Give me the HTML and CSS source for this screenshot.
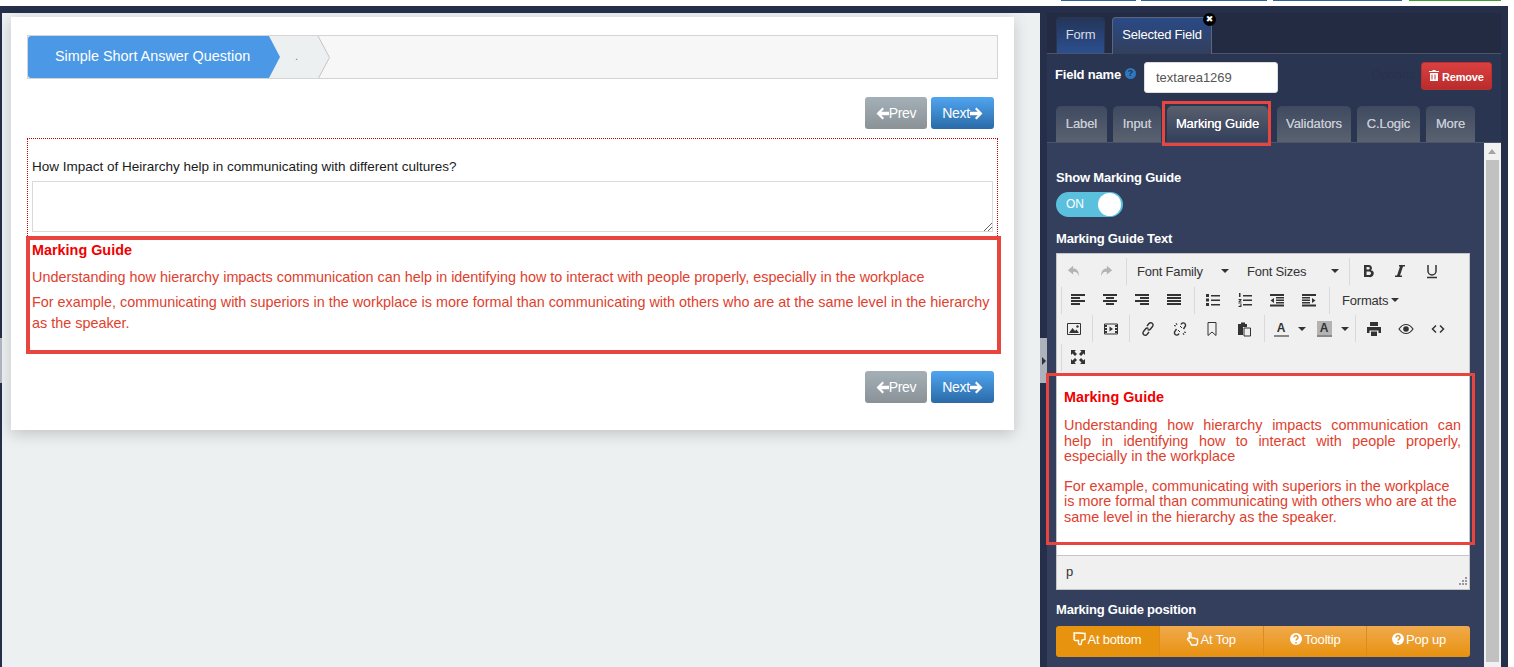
FILE: index.html
```html
<!DOCTYPE html>
<html lang="en">

<head>
    <meta charset="UTF-8" />
    <title>Marking Guide</title>
    <link rel="stylesheet" href="styles.css">
</head>

<body>
    <div class="topstrip">
        <span class="topbtn blue1"></span>
        <span class="topbtn blue2"></span>
        <span class="topbtn blue3"></span>
        <span class="topbtn green"></span>
    </div>
    <div class="app">
        <div class="leftpane">
            <div class="card">
                <div class="steps">
                    <div class="step-active">Simple Short Answer Question</div>
                    <div class="step-next">
                        <span class="dot">.</span>
                        <svg class="chevron" width="13" height="43" viewBox="0 0 13 43">
                            <path d="M0 0H1L12.500 21.500L1 43H0Z" fill="#ecf0f1" />
                            <path d="M1 0L12.500 21.500L1 43" fill="none" stroke="#c4c4c4" />
                        </svg>
                    </div>
                </div>
                <div class="pager">
                    <button class="btn prev"><svg class="arrow" width="13" height="13" viewBox="0 0 13 13"><path d="M6.500.5L.5 6.500l6 6L8 11 5.300 8.300H13V4.700H5.300L8 2z" fill="#fff" /></svg>Prev</button>
                    <button class="btn next">Next<svg class="arrow" width="13" height="13" viewBox="0 0 13 13"><path d="M6.500.5l6 6-6 6L5 11l2.700-2.700H0V4.700h7.700L5 2z" fill="#fff" /></svg></button>
                </div>
                <div class="question">
                    <label class="qlabel">How Impact of Heirarchy help in communicating with different cultures?</label>
                    <div class="answer">
                        <svg class="grip" width="9" height="9" viewBox="0 0 9 9"><path d="M9 1L1 9M9 5L5 9" stroke="#666" fill="none" /></svg>
                    </div>
                </div>
                <div class="guide">
                    <h4>Marking Guide</h4>
                    <p>Understanding how hierarchy impacts communication can help in identifying how to interact with people properly, especially in the workplace</p>
                    <p>For example, communicating with superiors in the workplace is more formal than communicating with others who are at the same level in the hierarchy as the speaker.</p>
                </div>
                <div class="pager pager-bottom">
                    <button class="btn prev"><svg class="arrow" width="13" height="13" viewBox="0 0 13 13"><path d="M6.500.5L.5 6.500l6 6L8 11 5.300 8.300H13V4.700H5.300L8 2z" fill="#fff" /></svg>Prev</button>
                    <button class="btn next">Next<svg class="arrow" width="13" height="13" viewBox="0 0 13 13"><path d="M6.500.5l6 6-6 6L5 11l2.700-2.700H0V4.700h7.700L5 2z" fill="#fff" /></svg></button>
                </div>
            </div>
            <div class="edgehandle"></div>
        </div>

        <div class="divider">
            <div class="collapse"><span class="collapse-arrow"></span></div>
        </div>

        <div class="rightpane">
            <div class="maintabs">
                <div class="tab">Form</div>
                <div class="tab tab-on">Selected Field<span class="closex">✖</span></div>
            </div>
            <div class="fieldrow">
                <span class="fieldlabel">Field name</span>
                <span class="helpdot">?</span>
                <div class="fieldinput">textarea1269</div>
                <span class="options">Options</span>
                <button class="removebtn">
                    <svg width="10" height="11" viewBox="0 0 10 11"><path d="M3.500 1V0h3v1H10v1H0V1zM1 3h8v8H1zm1.500 1.500v5h1v-5zm3 0v5h1v-5z" fill="#fff" /></svg>
                    Remove
                </button>
            </div>
            <div class="subtabs">
                <div class="subtab st-label">Label</div>
                <div class="subtab st-input">Input</div>
                <div class="subtab subtab-on">Marking Guide</div>
                <div class="subtab st-valid">Validators</div>
                <div class="subtab st-logic">C.Logic</div>
                <div class="subtab st-more">More</div>
            </div>
            <div class="panel">
                <div class="panelbody">
                    <div class="section-title first">Show Marking Guide</div>
                    <div class="toggle"><span>ON</span><i class="knob"></i></div>
                    <div class="section-title title-text">Marking Guide Text</div>
                    <div class="editor">
                        <div class="toolbar">
                            <div class="tbrow">
                                <span class="ic"><svg width="14" height="14" viewBox="0 0 16 16"><path d="M7 2L1 7l6 5V9c3-.5 5 .5 6.500 5C14 8 11 5 7 5z" fill="#b3b3b3" /></svg></span>
                                <span class="ic"><svg width="14" height="14" viewBox="0 0 16 16"><path d="M9 2l6 5-6 5V9c-3-.5-5 .5-6.500 5C2 8 5 5 9 5z" fill="#b3b3b3" /></svg></span>
                                <i class="sep"></i>
                                <span class="drop w110">Font Family<b class="caret"></b></span>
                                <span class="drop w106">Font Sizes<b class="caret"></b></span>
                                <i class="sep"></i>
                                <span class="ic"><svg width="16" height="16" viewBox="0 0 16 16"><path d="M4 2h5a3 3 0 0 1 2 5.200A3.400 3.400 0 0 1 9.500 14H4zm2.500 2v2.500H8.500a1.200 1.200 0 0 0 0-2.500zm0 4.500V12h2.800a1.700 1.700 0 0 0 0-3.500z" fill="#333" /></svg></span>
                                <span class="ic"><svg width="16" height="16" viewBox="0 0 16 16"><path d="M7 2h6v1.500h-2L8 12.500h2V14H3v-1.500h2L8 3.500H7z" fill="#333" /></svg></span>
                                <span class="ic"><svg width="16" height="16" viewBox="0 0 16 16"><path d="M4 2v6a4 4 0 0 0 8 0V2M3 14.500h10" fill="none" stroke="#333" stroke-width="1.500" /></svg></span>
                            </div>
                            <div class="tbrow">
                                <i class="sep sep-lead"></i>
                                <span class="ic"><svg width="16" height="16" viewBox="0 0 16 16"><path d="M1 2h14v2H1zm0 3h9v2H1zm0 3h14v2H1zm0 3h9v2H1z" fill="#333" /></svg></span>
                                <span class="ic"><svg width="16" height="16" viewBox="0 0 16 16"><path d="M1 2h14v2H1zm3 3h8v2H4zM1 8h14v2H1zm3 3h8v2H4z" fill="#333" /></svg></span>
                                <span class="ic"><svg width="16" height="16" viewBox="0 0 16 16"><path d="M1 2h14v2H1zm5 3h9v2H6zM1 8h14v2H1zm5 3h9v2H6z" fill="#333" /></svg></span>
                                <span class="ic"><svg width="16" height="16" viewBox="0 0 16 16"><path d="M1 2h14v2H1zm0 3h14v2H1zm0 3h14v2H1zm0 3h14v2H1z" fill="#333" /></svg></span>
                                <i class="sep"></i>
                                <span class="ic"><svg width="16" height="16" viewBox="0 0 16 16"><path d="M1 2h3v3H1zm0 4.500h3v3H1zM1 11h3v3H1zM6 3h9v1.500H6zm0 4.500h9V9H6zM6 12h9v1.500H6z" fill="#333" /></svg></span>
                                <span class="ic"><svg width="16" height="16" viewBox="0 0 16 16"><path d="M6 3h9v1.500H6zm0 4.500h9V9H6zM6 12h9v1.500H6zM2 1h1.500v4H2zM1.500 7h3v1l-1.500 1.500h1.500v1h-3v-1L3 8H1.500zm0 4.500h3v3.500h-3v-1h2v-.5h-1v-.5h1V12h-2z" fill="#333" /></svg></span>
                                <span class="ic"><svg width="16" height="16" viewBox="0 0 16 16"><path d="M1 2h14v2H1zm6 3h8v1.500H7zm0 2.500h8V9H7zM7 10h8v1.500H7zM1 12.500h14V14.500H1zM5 6v5L1.500 8.500z" fill="#333" /></svg></span>
                                <span class="ic"><svg width="16" height="16" viewBox="0 0 16 16"><path d="M1 2h14v2H1zm0 3h8v1.500H1zm0 2.500h8V9H1zM1 10h8v1.500H1zM1 12.500h14V14.500H1zM11 6v5l3.500-2.500z" fill="#333" /></svg></span>
                                <i class="sep"></i>
                                <span class="drop formats">Formats<b class="caret"></b></span>
                            </div>
                            <div class="tbrow">
                                <span class="ic"><svg width="16" height="16" viewBox="0 0 16 16"><path d="M1.500 2.500h13v11h-13z" fill="none" stroke="#333" /><path d="M3 12l3.500-5 2.500 3 1.500-1.500L13 12z" fill="#333" /><circle cx="11.500" cy="5.500" r="1.200" fill="#333" /></svg></span>
                                <i class="sep sep-tight"></i>
                                <span class="ic"><svg width="16" height="16" viewBox="0 0 16 16"><path d="M1.500 3h13v10h-13z" fill="none" stroke="#333" /><path d="M2 4h2v2H2zm0 3h2v2H2zm0 3h2v2H2zm10-6h2v2h-2zm0 3h2v2h-2zm0 3h2v2h-2zM6.500 5.500v5L10 8z" fill="#333" /></svg></span>
                                <i class="sep sep-tight"></i>
                                <span class="ic"><svg width="16" height="16" viewBox="0 0 16 16"><path d="M7 5l2-2.500a2.300 2.300 0 0 1 3.500 3L10.500 8a2.300 2.300 0 0 1-3 .5M9 11l-2 2.500a2.300 2.300 0 0 1-3.500-3L5.500 8a2.300 2.300 0 0 1 3-.5" fill="none" stroke="#333" stroke-width="1.400" /></svg></span>
                                <span class="ic"><svg width="16" height="16" viewBox="0 0 16 16"><path d="M9 3.500l.5-.8a2.300 2.300 0 0 1 3.500 3L11.500 8M7 12.500l-.5.800a2.300 2.300 0 0 1-3.500-3L4.500 8" fill="none" stroke="#333" stroke-width="1.400" /><path d="M4 2l1 2M2 4.500l2 .5M12 14l-1-2M14 11.500l-2-.5M8 5l2 2M6 9l2 2" stroke="#333" /></svg></span>
                                <span class="ic"><svg width="16" height="16" viewBox="0 0 16 16"><path d="M4 1.500h8v13l-4-3.500-4 3.500z" fill="none" stroke="#333" /></svg></span>
                                <span class="ic"><svg width="16" height="16" viewBox="0 0 16 16"><path d="M2 3h3V1.500h4V3h2v3H7v8H2z" fill="#333" /><path d="M8 7h6.500v8H8z" fill="#eee" stroke="#333" /></svg></span>
                                <i class="sep"></i>
                                <span class="ic ic-color"><span class="colorA">A</span></span>
                                <b class="caret alone"></b>
                                <span class="ic ic-color ic-bg"><span class="colorA">A</span></span>
                                <b class="caret alone"></b>
                                <i class="sep sep-tight"></i>
                                <span class="ic"><svg width="16" height="16" viewBox="0 0 16 16"><path d="M4 1h8v4H4zM1 6h14v6h-2.500V9.500h-9V12H1zm4 4.500h6V15H5z" fill="#333" /></svg></span>
                                <span class="ic"><svg width="16" height="16" viewBox="0 0 16 16"><path d="M1 8c2-3 4.500-4.500 7-4.500S13 5 15 8c-2 3-4.500 4.500-7 4.500S3 11 1 8z" fill="none" stroke="#333" stroke-width="1.200" /><circle cx="8" cy="8" r="2.800" fill="#333" /></svg></span>
                                <span class="ic"><svg width="16" height="16" viewBox="0 0 16 16"><path d="M6 4.500L2.500 8 6 11.500M10 4.500L13.500 8 10 11.500" fill="none" stroke="#333" stroke-width="1.500" /></svg></span>
                            </div>
                            <div class="tbrow">
                                <i class="sep sep-lead"></i>
                                <span class="ic"><svg width="16" height="16" viewBox="0 0 16 16"><path d="M1 1h5L4.500 2.500 7 5 5 7 2.500 4.500 1 6zm14 0v5l-1.500-1.500L11 7 9 5l2.500-2.500L10 1zM1 15v-5l1.500 1.500L5 9l2 2-2.500 2.500L6 15zm14 0h-5l1.500-1.500L9 11l2-2 2.500 2.500L15 10z" fill="#333" /></svg></span>
                            </div>
                        </div>
                        <div class="editarea">
                            <h4>Marking Guide</h4>
                            <p class="just">Understanding how hierarchy impacts communication can help in identifying how to interact with people properly, especially in the workplace</p>
                            <p>For example, communicating with superiors in the workplace is more formal than communicating with others who are at the same level in the hierarchy as the speaker.</p>
                        </div>
                        <div class="statusbar">p
                            <svg class="resize" width="10" height="10" viewBox="0 0 10 10"><path d="M8 0h2v2H8zM5 3h2v2H5zm3 0h2v2H8zM2 6h2v2H2zm3 0h2v2H5zm3 0h2v2H8z" fill="#999" /></svg>
                        </div>
                    </div>
                    <div class="section-title position">Marking Guide position</div>
                    <div class="btngroup">
                        <button class="orange orange-on"><svg width="13" height="14" viewBox="0 0 13 14"><path d="M1 1h6l5 .5v6L9 8l-1 4.500c-1.500.5-2.500-.5-2.500-1.500V8.500H2.500C1 8.500 .5 7 1.500 6 .5 5 .8 3.800 1.500 3.500 1 2.500 1 1.500 1 1z" fill="none" stroke="#fff" stroke-width="1.400" /></svg>At bottom</button>
                        <button class="orange"><svg width="13" height="14" viewBox="0 0 13 14"><path d="M3 1c1-.5 2 0 2 1v3.500l6.500 1.500V11l-1 2H5.500L4 10 1.500 7.500C1.500 6 3 6 3.500 7z" fill="none" stroke="#fff" stroke-width="1.400" /></svg>At Top</button>
                        <button class="orange"><svg width="14" height="14" viewBox="0 0 14 14"><circle cx="7" cy="7" r="6" fill="#fff" /><path d="M5 5.500a2 2 0 1 1 3 1.700c-.7.400-1 .8-1 1.300M7 10v1.500" fill="none" stroke="#e8961f" stroke-width="1.500" /></svg>Tooltip</button>
                        <button class="orange"><svg width="14" height="14" viewBox="0 0 14 14"><circle cx="7" cy="7" r="6" fill="#fff" /><path d="M5 5.500a2 2 0 1 1 3 1.700c-.7.400-1 .8-1 1.300M7 10v1.500" fill="none" stroke="#e8961f" stroke-width="1.500" /></svg>Pop up</button>
                    </div>
                </div>
                <div class="scrollbar">
                    <span class="scroll-up"></span>
                    <div class="scroll-thumb"></div>
                </div>
            </div>
            <div class="mark mark-tab"></div>
            <div class="mark mark-editor"></div>
        </div>
    </div>
</body>

</html>
```

FILE: styles.css
```css
* {
    box-sizing: border-box;
}

html,
body {
    margin: 0;
    height: 667px;
    overflow: hidden;
    background: #fff;
    font-family: "Liberation Sans", Arial, sans-serif;
}

.topstrip {
    height: 6px;
    background: #fff;
    position: relative;
}

.topbtn {
    position: absolute;
    top: 0;
    height: 1px;
}

.blue1 {
    left: 1061px;
    width: 75px;
    background: #2a6496;
}

.blue2 {
    left: 1141px;
    width: 126px;
    background: #2a6496;
}

.blue3 {
    left: 1273px;
    width: 129px;
    background: #2a6496;
}

.green {
    left: 1409px;
    width: 92px;
    background: #3f9c35;
}

.app {
    display: flex;
    height: 661px;
    width: 1508px;
    background: #262f4a;
}

.leftpane {
    width: 1038px;
    margin: 7px 0 0 2px;
    padding: 4px 0 0 9px;
    background: #ecf0f1;
    position: relative;
}

.edgehandle {
    position: absolute;
    left: -2px;
    top: 325px;
    width: 2px;
    height: 45px;
    background: #adb2bd;
}

.card {
    width: 1003px;
    height: 413px;
    background: #fff;
    box-shadow: 0 4px 14px rgba(0, 0, 0, 0.18);
    padding: 18px 16px 0 16px;
}

.steps {
    height: 44px;
    display: flex;
    background: #f7f7f7;
    border: 1px solid #d4d4d4;
}

.step-active {
    width: 252px;
    background: #4a98e6;
    color: #fff;
    font-size: 14.400px;
    line-height: 41px;
    padding-left: 27px;
    border-radius: 3px 0 0 3px;
    clip-path: polygon(0 0, 241px 0, 252px 50%, 241px 100%, 0 100%);
    position: relative;
    z-index: 1;
}

.step-next {
    width: 61px;
    margin-left: -11px;
    position: relative;
    background: linear-gradient(to right, #ecf0f1 49px, transparent 49px);
}

.dot {
    position: absolute;
    left: 26px;
    top: 14px;
    font-size: 11px;
    color: #777;
}

.chevron {
    position: absolute;
    right: 0;
    top: -0.500px;
}

.pager {
    display: flex;
    justify-content: flex-end;
    gap: 4px;
    padding-right: 4px;
    margin-top: 18px;
}

.btn {
    height: 32px;
    border: none;
    border-radius: 3px;
    color: #fff;
    font-family: inherit;
    font-size: 14px;
    letter-spacing: -0.3px;
    padding: 0;
    display: flex;
    align-items: center;
    justify-content: center;
}

.prev {
    width: 62px;
    background: linear-gradient(#a4b0b7, #8a9297);
}

.next {
    width: 63px;
    background: linear-gradient(#50a5f0, #2a6aa7);
}

.arrow {
    flex: none;
}

.question {
    margin-top: 9px;
    height: 100px;
    border: 1px dotted #c00000;
    border-bottom: none;
    padding: 19px 4px 0 4px;
}

.qlabel {
    display: block;
    font-size: 13.500px;
    line-height: 18px;
    color: #1a1a1a;
}

.answer {
    height: 51px;
    margin-top: 5px;
    border: 1px solid #d9d9d9;
    position: relative;
}

.grip {
    position: absolute;
    right: 0;
    bottom: 0;
}

.guide {
    margin-left: -1px;
    height: 118px;
    margin-top: -2px;
    width: 975px;
    border: 4px solid #e8453f;
    padding: 0 4px 0 2px;
    color: #e03e2d;
    font-size: 14.400px;
    line-height: 21px;
}

.guide h4 {
    margin: 0 0 7px 0;
    color: #f00000;
    font-size: 14.400px;
    line-height: 20px;
}

.guide p {
    margin: 0 0 4px 0;
}

.pager-bottom {
    margin-top: 17px;
}

.divider {
    width: 7px;
    position: relative;
}

.collapse {
    position: absolute;
    left: 0;
    top: 332px;
    width: 8px;
    height: 45px;
    background: #adb2bd;
    display: flex;
    align-items: center;
    justify-content: center;
}

.collapse-arrow {
    width: 0;
    height: 0;
    border-left: 4px solid #333;
    border-top: 4px solid transparent;
    border-bottom: 4px solid transparent;
}

.rightpane {
    width: 454px;
    position: relative;
    padding-top: 7px;
}

.maintabs {
    height: 41px;
    display: flex;
    gap: 7px;
    padding: 4px 0 0 9px;
    background: #232b42;
    border-bottom: 1px solid #4b5468;
}

.tab {
    height: 36px;
    width: 49px;
    border-radius: 4px 4px 0 0;
    color: #d8dde6;
    font-size: 13px;
    line-height: 34px;
    text-align: center;
    letter-spacing: -0.2px;
    background: linear-gradient(#243558, #2c4f90);
    border: 1px solid #2b3650;
    border-bottom: none;
}

.tab-on {
    width: 100px;
    height: 37px;
    color: #fff;
    background: linear-gradient(#2a4a86, #333f5c);
    border-color: #5c677d;
    position: relative;
}

.closex {
    position: absolute;
    right: -5px;
    top: -5px;
    width: 13px;
    height: 13px;
    border-radius: 50%;
    background: #000;
    color: #fff;
    font-size: 9px;
    line-height: 13px;
    text-align: center;
    letter-spacing: 0;
    font-family: "DejaVu Sans", sans-serif;
}

.fieldrow {
    display: flex;
    align-items: flex-start;
    height: 52px;
    padding: 8px 0 0 8px;
    background: #2a3551;
}

.fieldlabel {
    color: #fff;
    font-size: 13px;
    font-weight: bold;
    line-height: 26px;
    letter-spacing: -0.2px;
}

.helpdot {
    width: 11px;
    height: 11px;
    border-radius: 50%;
    background: #2e78c0;
    color: #26304a;
    font-size: 9px;
    line-height: 11px;
    font-weight: bold;
    text-align: center;
    margin: 6px 0 0 4px;
}

.fieldinput {
    width: 134px;
    height: 31px;
    margin-left: 8px;
    background: #fff;
    border-radius: 3px;
    border: 1px solid #ddd;
    padding-left: 11px;
    color: #555;
    font-size: 13px;
    line-height: 29px;
}

.options {
    margin-left: 93px;
    font-size: 13px;
    line-height: 26px;
    color: #28324c;
    width: 50px;
    overflow: hidden;
}

.removebtn {
    width: 71px;
    height: 28px;
    border: 1px solid #b8312f;
    border-radius: 3px;
    background: linear-gradient(#dc4040, #b92c2c);
    color: #fff;
    font-family: inherit;
    font-size: 11px;
    font-weight: bold;
    letter-spacing: -0.2px;
    padding: 0;
}

.subtabs {
    height: 37px;
    display: flex;
    padding-left: 9px;
    gap: 6px;
    background: #2a3551;
    border-bottom: 1px solid #4b5468;
}

.subtab {
    height: 36px;
    border-radius: 5px 5px 0 0;
    background: linear-gradient(#3f4a60, #5a6270);
    color: #c5cad3;
    font-size: 13px;
    line-height: 35px;
    text-align: center;
    letter-spacing: -0.1px;
    text-shadow: 0 0 0.500px #c5cad3;
}

.st-label {
    width: 51px;
}

.st-input {
    width: 48px;
}

.st-valid {
    width: 74px;
}

.st-logic {
    width: 63px;
}

.st-more {
    width: 49px;
}

.subtab-on {
    width: 101px;
    margin-right: 3px;
    color: #fff;
    text-shadow: 0 0 0.500px #fff;
    background: linear-gradient(#585f6d, #333f5c);
}

.panel {
    display: flex;
    height: 524px;
    background: #333f5c;
}

.panelbody {
    width: 437px;
    padding: 0 0 0 9px;
}

.section-title {
    color: #fff;
    font-size: 13px;
    font-weight: bold;
    line-height: 16px;
    letter-spacing: -0.2px;
}

.first {
    margin-top: 27px;
}

.title-text {
    margin-top: 14px;
}

.toggle {
    width: 67px;
    height: 25px;
    margin-top: 6px;
    border-radius: 13px;
    background: #5bc0de;
    color: #fff;
    font-size: 12px;
    line-height: 25px;
    padding-left: 10px;
    position: relative;
}

.knob {
    position: absolute;
    right: 2px;
    top: 1px;
    width: 23px;
    height: 23px;
    border-radius: 50%;
    background: #fff;
}

.editor {
    width: 414px;
    margin-top: 6px;
    border: 1px solid #c5c5c5;
    background: #f0f0f0;
}

.toolbar {
    height: 121px;
    padding: 3px 0 0 1px;
}

.tbrow {
    display: flex;
    align-items: center;
    height: 28.700px;
}

.ic {
    width: 32px;
    height: 25px;
    display: flex;
    align-items: center;
    justify-content: center;
    flex: none;
}

.sep {
    width: 1px;
    height: 27px;
    background: #d9d9d9;
    flex: none;
    margin: 0 2px 0 4px;
}

.sep-tight {
    margin: 0 2px;
}

.sep-lead {
    margin: 0 0 0 3px;
}

.drop {
    font-size: 13px;
    letter-spacing: -0.2px;
    color: #333;
    display: flex;
    align-items: center;
    justify-content: space-between;
    flex: none;
}

.w110 {
    width: 110px;
    padding: 0 10px 0 8px;
}

.w106 {
    width: 106px;
    padding: 0 6px 0 8px;
}

.formats {
    padding-left: 10px;
}

.formats .caret {
    margin-left: 3px;
}

.caret {
    width: 0;
    height: 0;
    border-top: 4px solid #333;
    border-left: 4px solid transparent;
    border-right: 4px solid transparent;
}

.alone {
    flex: none;
    margin: 0 4px 0 3px;
}

.ic-color {
    width: 28px;
}

.colorA {
    width: 15px;
    height: 16px;
    font-size: 12px;
    font-weight: bold;
    text-align: center;
    color: #333;
    line-height: 15px;
    border-bottom: 2px solid #888;
}

.ic-bg .colorA {
    background: #b3b3b3;
}

.editarea {
    height: 181px;
    background: #fff;
    border-top: 1px solid #c5c5c5;
    border-bottom: 1px solid #c5c5c5;
    padding: 13px 8px 0 7px;
    color: #e03e2d;
    font-size: 14.400px;
    line-height: 15.600px;
}

.editarea h4 {
    margin: 0 0 13px 0;
    font-size: 14.400px;
    line-height: 16px;
    color: #f00000;
}

.editarea p {
    margin: 0 0 14px 0;
}

.just {
    text-align: justify;
}

.statusbar {
    height: 33px;
    padding: 8px 0 0 9px;
    font-size: 13px;
    color: #333;
    position: relative;
}

.resize {
    position: absolute;
    right: 2px;
    bottom: 2px;
}

.position {
    margin-top: 12px;
}

.btngroup {
    display: flex;
    width: 414px;
    height: 31px;
    margin-top: 8px;
}

.orange {
    flex: 1;
    border: none;
    border-right: 1px solid #dd8b1c;
    color: #fff;
    font-family: inherit;
    font-size: 13px;
    letter-spacing: -0.2px;
    background: linear-gradient(#f0aa4c, #e8910f);
    display: flex;
    align-items: center;
    justify-content: center;
    gap: 1px;
    padding: 0 0 5px 0;
}

.orange:first-child {
    border-radius: 3px 0 0 3px;
}

.orange:last-child {
    border-radius: 0 3px 3px 0;
    border-right: none;
}

.orange-on {
    background: #e8930f;
}

.scrollbar {
    width: 17px;
    background: #f1f1f1;
    position: relative;
    padding: 17px 2px 0 2px;
}

.scroll-up {
    position: absolute;
    top: 6px;
    left: 4px;
    border-bottom: 5px solid #a3a3a3;
    border-left: 4.500px solid transparent;
    border-right: 4.500px solid transparent;
}

.scroll-thumb {
    height: 502px;
    background: #c1c1c1;
}

.mark {
    position: absolute;
    border: 3px solid #e8453f;
    pointer-events: none;
}

.mark-tab {
    left: 115px;
    top: 95px;
    width: 109px;
    height: 45px;
}

.mark-editor {
    left: -1px;
    top: 367px;
    width: 429px;
    height: 172px;
}
```
